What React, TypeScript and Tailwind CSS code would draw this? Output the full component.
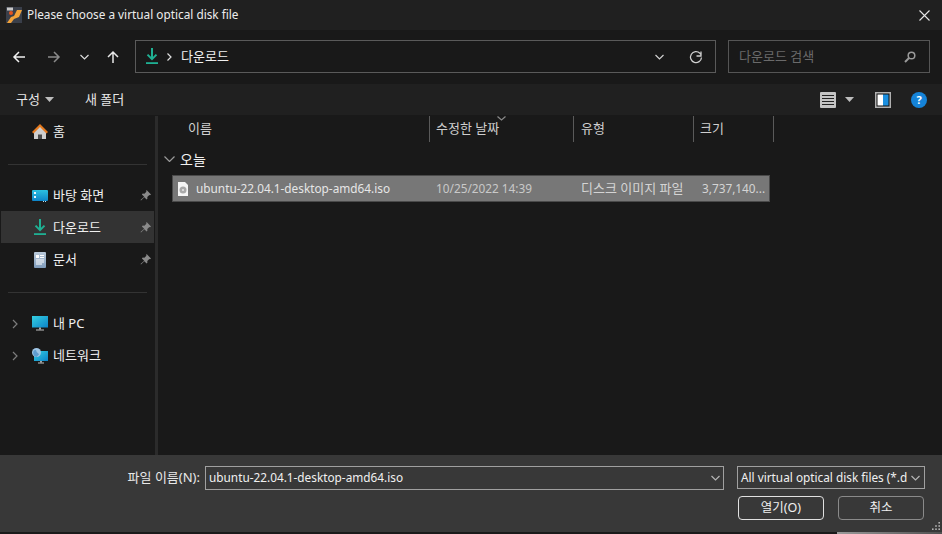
const UI = { fontFamily: '"Noto Sans", "Noto Sans CJK KR", sans-serif' };

function Chevron({ cls, d = "M1 1l4 4 4-4", w = 10, h = 6, c = "currentColor" }: { cls?: string; d?: string; w?: number; h?: number; c?: string }) {
  return (
    <svg width={w} height={h} viewBox={`0 0 ${w} ${h}`} className={cls} fill="none" stroke={c} strokeWidth="1.2">
      <path d={d} />
    </svg>
  );
}

function Arrow({ dir, color }: { dir: "l" | "r" | "u"; color: string }) {
  const d = dir === "l" ? "M13 7H2M7 2L2 7l5 5" : dir === "r" ? "M1 7h11M7 2l5 5-5 5" : "M7 13V2M2 7l5-5 5 5";
  return (
    <svg width="14" height="14" viewBox="0 0 14 14" fill="none" stroke={color} strokeWidth="1.5">
      <path d={d} />
    </svg>
  );
}

function DownloadIcon({ size = 12 }: { size?: number }) {
  return (
    <svg width={size} height={size * 1.35} viewBox="0 0 12 16" fill="none" stroke="#1fb093" strokeWidth="2">
      <path d="M6 0v11M1.500 6.500L6 11l4.500-4.500" />
      <path d="M0 15h12" strokeWidth="1.800" />
    </svg>
  );
}

function Pin() {
  return (
    <svg width="11" height="11" viewBox="0 0 11 11" fill="#8a8a8a">
      <path d="M6.600 0L11 4.400l-1 .8-.7-.2-2 2 .1 1.700-.8.8-2.300-2.300L1 10.500l-.5-.5 3.700-3.300L1.900 4.400l.8-.8 1.700.1 2-2-.2-.7z" />
    </svg>
  );
}

function HomeIcon() {
  return (
    <svg width="16" height="16" viewBox="0 0 16 16">
      <path d="M2 7.500L8 2l6 5.500V15H2z" fill="#cfcfcf" />
      <rect x="6" y="10.500" width="4" height="4.500" fill="#4a4a4a" />
      <path d="M0 8L8 0l8 8-1.500 1.500L8 3 1.500 9.500z" fill="#e67a1e" />
    </svg>
  );
}

function DesktopIcon() {
  return (
    <svg width="16" height="12" viewBox="0 0 16 12">
      <defs>
        <linearGradient id="dg" x1="0" y1="0" x2="0" y2="1">
          <stop offset="0" stopColor="#2cc0e0" />
          <stop offset="1" stopColor="#0d84c8" />
        </linearGradient>
      </defs>
      <rect width="16" height="11" y="0" rx="1" fill="url(#dg)" />
      <rect x="2" y="2" width="2" height="2" fill="#e8f6fb" />
      <rect x="2" y="6" width="2" height="2" fill="#e8f6fb" />
      <rect x="11" y="11" width="1" height="1" fill="#bfe4f3" />
      <rect x="13" y="11" width="1" height="1" fill="#bfe4f3" />
    </svg>
  );
}

function DocIcon() {
  return (
    <svg width="12" height="16" viewBox="0 0 12 16">
      <defs>
        <linearGradient id="doc" x1="0" y1="0" x2="0" y2="1">
          <stop offset="0" stopColor="#b9c9d9" />
          <stop offset="1" stopColor="#7f9cbc" />
        </linearGradient>
      </defs>
      <rect width="12" height="16" rx="1" fill="url(#doc)" />
      <rect x="2" y="3" width="3" height="3" fill="#fff" />
      <path d="M6 3.500h4M6 5.500h4M2 8h8M2 10h8M2 12h6" stroke="#fff" strokeWidth="1" />
    </svg>
  );
}

function PcIcon() {
  return (
    <svg width="16" height="15" viewBox="0 0 16 15">
      <defs>
        <linearGradient id="pc" x1="0" y1="0" x2="1" y2="1">
          <stop offset="0" stopColor="#34cfe0" />
          <stop offset="1" stopColor="#0c83c9" />
        </linearGradient>
      </defs>
      <rect width="16" height="11.500" fill="url(#pc)" />
      <rect x="7" y="11.500" width="2" height="2" fill="#a5a5a5" />
      <rect x="4" y="13.500" width="8" height="1" fill="#c2c2c2" />
    </svg>
  );
}

function NetIcon() {
  return (
    <svg width="16" height="16" viewBox="0 0 16 16">
      <defs>
        <linearGradient id="net" x1="0" y1="0" x2="1" y2="1">
          <stop offset="0" stopColor="#34cfe0" />
          <stop offset="1" stopColor="#0c83c9" />
        </linearGradient>
      </defs>
      <rect x="2" y="3" width="14" height="10" fill="url(#net)" />
      <rect x="8" y="13" width="2" height="1.500" fill="#a5a5a5" />
      <rect x="6" y="14.500" width="6" height="1" fill="#c2c2c2" />
      <circle cx="4.500" cy="4.500" r="4.500" fill="#9fc6e6" />
      <path d="M1.500 3c1.500-1.500 3-1 3 .5s2 1 2.500 3L4.500 9C2 8.500.5 6 1.500 3z" fill="#5f9ccf" />
    </svg>
  );
}

function SideItem({
  icon,
  label,
  pin,
  active,
  expand,
}: {
  icon: React.ReactNode;
  label: string;
  pin?: boolean;
  active?: boolean;
  expand?: boolean;
}) {
  return (
    <div className={`flex h-8 items-center ml-px mr-px pr-[3px] pt-[1px] ${active ? "bg-[#333333]" : ""}`}>
      <div className="w-[31px] flex pl-[11px]">
        {expand && <Chevron w={6} h={10} d="M1 1l4 4-4 4" c="#7d7d7d" />}
      </div>
      <div className="w-[16px] flex justify-center shrink-0">{icon}</div>
      <span className="ml-[5px] text-[13px] text-[#f0f0f0] flex-1">{label}</span>
      {pin && <Pin />}
    </div>
  );
}

export default function App() {
  return (
    <div className="w-[942px] h-[534px] flex flex-col bg-[#191919] overflow-hidden text-[13px] text-[#e8e8e8]" style={UI}>
      {/* title bar */}
      <div className="h-[30px] bg-[#202020] flex items-center pl-[6px] pr-[12px] shrink-0">
        <svg width="16" height="16" viewBox="0 0 16 16" className="shrink-0">
          <rect width="16" height="16" fill="#3a3f4a" />
          <path d="M1 16l4-6 3-1 3-6h5l-3 7-5 2-3 4z" fill="#f2a33a" />
          <circle cx="5" cy="6" r="2" fill="#e2551f" />
          <rect x="1" y="0.500" width="6" height="3" fill="#c9c9c9" />
        </svg>
        <span className="ml-[5px] flex-1 text-[11.800px] text-[#ececec]">Please choose a virtual optical disk file</span>
        <svg width="11" height="11" viewBox="0 0 11 11" stroke="#e6e6e6" strokeWidth="1.100">
          <path d="M.5.500l10 10M10.500.500l-10 10" />
        </svg>
      </div>

      {/* nav bar */}
      <div className="h-[54px] flex items-center bg-[#191919] shrink-0">
        <div className="w-[135px] flex items-center pl-[12px] shrink-0">
          <Arrow dir="l" color="#f0f0f0" />
          <span className="ml-[21px]"><Arrow dir="r" color="#8a8a8a" /></span>
          <Chevron cls="ml-[19px] text-[#dcdcdc]" w={9} h={6} d="M.5 1l4 4 4-4" />
          <span className="ml-[17px]"><Arrow dir="u" color="#e8e8e8" /></span>
        </div>
        <div className="w-[581px] h-[33px] border border-[#5a5a5a] flex items-center pl-[10px] pr-[12px] mt-[-1px]">
          <DownloadIcon />
          <Chevron cls="ml-[9px] text-[#e0e0e0]" w={5} h={8} d="M.5.500L4 4 .500 7.500" />
          <span className="ml-[9px] text-[#f0f0f0] flex-1">다운로드</span>
          <Chevron cls="text-[#d0d0d0] mr-[25px]" w={9} h={6} d="M.5 1l4 4 4-4" />
          <svg width="14" height="14" viewBox="0 0 14 14" fill="none" stroke="#cfcfcf" strokeWidth="1.300">
            <path d="M12 1.500V6H7.500" />
            <path d="M12.500 7.500a5.500 5.500 0 1 1-1.600-4.300L12 4.500" />
          </svg>
        </div>
        <div className="ml-[12px] w-[202px] h-[33px] border border-[#555555] flex items-center pl-[10px] pr-[13px] mt-[-1px]">
          <span className="flex-1 text-[#6a6a6a]">다운로드 검색</span>
          <svg width="12" height="12" viewBox="0 0 12 12" fill="none" stroke="#9a9a9a">
            <circle cx="7.500" cy="4.500" r="3.300" strokeWidth="1.500" />
            <path d="M5 7l-4 4" strokeWidth="2" />
          </svg>
        </div>
      </div>

      {/* toolbar */}
      <div className="h-[31px] bg-[#202020] flex items-center pl-[16px] pr-[15px] shrink-0">
        <span className="text-[#e8e8e8]">구성</span>
        <svg width="9" height="5" viewBox="0 0 9 5" fill="#bdbdbd" className="ml-[5px]"><path d="M0 0h9L4.500 5z" /></svg>
        <span className="ml-[31px] text-[#e8e8e8] flex-1">새 폴더</span>
        <svg width="16" height="16" viewBox="0 0 16 16">
          <rect width="16" height="16" rx="1" fill="#c4c4c4" />
          <path d="M2 3.500h12M2 6.500h12M2 9.500h12M2 12.500h12" stroke="#222" strokeWidth="1" />
        </svg>
        <svg width="9" height="5" viewBox="0 0 9 5" fill="#bdbdbd" className="ml-[9px]"><path d="M0 0h9L4.500 5z" /></svg>
        <svg width="16" height="16" viewBox="0 0 16 16" className="ml-[21px]">
          <rect width="16" height="16" fill="#b0b0b0" />
          <rect x="1.500" y="1.500" width="13" height="13" fill="#111" />
          <rect x="2.500" y="2.500" width="5.500" height="11" fill="#fff" />
          <rect x="8" y="2.500" width="5.500" height="11" fill="#1b8fe0" />
        </svg>
        <div className="ml-[20px] w-4 h-4 rounded-full bg-[#1583d8] flex items-center justify-center text-[11px] font-bold text-white leading-none">?</div>
      </div>

      {/* main */}
      <div className="flex-1 flex min-h-0">
        <aside className="w-[155px] shrink-0">
          <SideItem icon={<HomeIcon />} label="홈" />
          <div className="mx-[8px] h-px bg-[#333333] mt-[17px] mb-[14px]" />
          <SideItem icon={<DesktopIcon />} label="바탕 화면" pin />
          <SideItem icon={<DownloadIcon size={12} />} label="다운로드" pin active />
          <SideItem icon={<DocIcon />} label="문서" pin />
          <div className="mx-[8px] h-px bg-[#333333] mt-[17px] mb-[14px]" />
          <SideItem icon={<PcIcon />} label="내 PC" expand />
          <SideItem icon={<NetIcon />} label="네트워크" expand />
        </aside>
        <div className="w-[3px] bg-[#2b2b2b] shrink-0 mt-[1px]" />
        <section className="flex-1 min-w-0 pl-[14px]">
          <div className="h-[26px] flex items-stretch mt-px text-[#cfcfcf]">
            <div className="w-[258px] border-r border-[#5a5a5a] flex items-center pl-[16px]">이름</div>
            <div className="w-[144px] border-r border-[#5a5a5a] flex items-center pl-[6px] relative">
              수정한 날짜
              <Chevron cls="absolute left-[67px] top-0 text-[#8a8a8a]" w={9} h={5} d="M.5.500l4 3.500 4-3.500" />
            </div>
            <div className="w-[120px] border-r border-[#5a5a5a] flex items-center pl-[7px]">유형</div>
            <div className="w-[80px] border-r border-[#5a5a5a] flex items-center pl-[6px]">크기</div>
          </div>
          <div className="h-[33px] flex items-center -ml-[8px] pt-[1px]">
            <Chevron cls="text-[#9a9a9a]" w={11} h={6} d="M.5.500l5 5 5-5" />
            <span className="ml-[5px] text-[14px] text-[#f0f0f0]">오늘</span>
          </div>
          <div className="w-[598px] h-[27px] bg-[#777777] border border-[#4a4a4a] flex items-center text-[#e6e6e6]">
            <svg width="10" height="14" viewBox="0 0 10 14" className="ml-[5px] shrink-0">
              <path d="M0 0h7l3 3v11H0z" fill="#f5f5f5" />
              <circle cx="5" cy="8" r="3.500" fill="#a9a9a9" />
              <circle cx="5" cy="8" r="1" fill="#e8e8e8" />
            </svg>
            <span className="ml-[8px] w-[240px] shrink-0 text-[11.800px]">ubuntu-22.04.1-desktop-amd64.iso</span>
            <span className="w-[145px] shrink-0 text-[11.800px] text-[#c9c9c9]">10/25/2022 14:39</span>
            <span className="w-[121px] shrink-0 text-[#d4d4d4]">디스크 이미지 파일</span>
            <span className="text-[11.800px] text-[#d4d4d4]">3,737,140...</span>
          </div>
        </section>
      </div>

      {/* footer */}
      <footer className="h-[77px] bg-[#383838] shrink-0 flex flex-col pt-[11px]">
        <div className="flex items-start">
          <span className="w-[200px] text-right text-[#e8e8e8] leading-[22px] shrink-0">파일 이름(N):</span>
          <div className="ml-[5px] w-[519px] h-[24px] border border-[#a0a0a0] flex items-center pl-[3px] pr-[2px] bg-[#383838]">
            <span className="flex-1 text-[11.800px] text-[#f0f0f0]">ubuntu-22.04.1-desktop-amd64.iso</span>
            <Chevron cls="mr-[1px] text-[#b5b5b5]" w={9} h={6} d="M.5 1l4 4 4-4" />
          </div>
          <div className="ml-[13px] w-[188px] h-[23px] border border-[#a0a0a0] flex items-center pl-[3px] pr-[4px]">
            <span className="flex-1 whitespace-nowrap text-[11.800px] text-[#f0f0f0]">All virtual optical disk files (*.d</span>
            <Chevron cls="text-[#b5b5b5] shrink-0" w={9} h={6} d="M.5 1l4 4 4-4" />
          </div>
        </div>
        <div className="flex mt-[6px] pl-[738px] relative">
          <button className="w-[86px] h-[24px] border border-[#e0e0e0] rounded-[4px] text-[12.500px] text-[#f0f0f0] flex items-center justify-center">열기(O)</button>
          <button className="ml-[14px] w-[86px] h-[24px] border border-[#8a8a8a] rounded-[4px] text-[12.500px] text-[#f0f0f0] flex items-center justify-center">취소</button>
          <svg width="8" height="8" viewBox="0 0 10 10" fill="#b0b0b0" className="absolute right-[2px] top-[26px]">
            <rect x="8" y="0" width="2" height="2" />
            <rect x="4" y="4" width="2" height="2" />
            <rect x="8" y="4" width="2" height="2" />
            <rect x="0" y="8" width="2" height="2" />
            <rect x="4" y="8" width="2" height="2" />
            <rect x="8" y="8" width="2" height="2" />
          </svg>
        </div>
      </footer>
      <div className="h-[2px] bg-[#1a1a1a] shrink-0 flex justify-end">
        <div className="w-[105px] bg-gradient-to-r from-[#9a9a9a] to-[#505050]" />
      </div>
    </div>
  );
}
